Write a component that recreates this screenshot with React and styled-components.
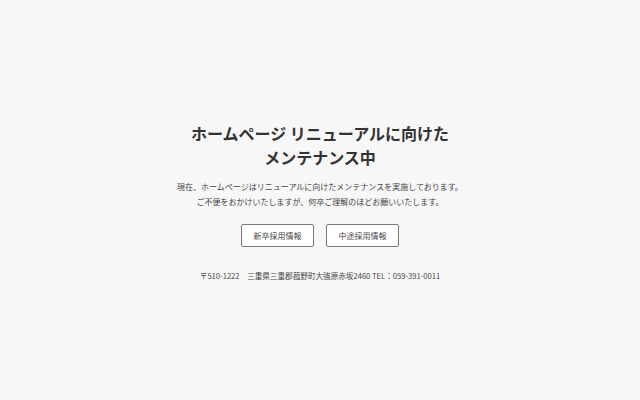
import React from 'react'
import styled, { createGlobalStyle } from 'styled-components'

const GlobalStyle = createGlobalStyle`
  html, body {
    margin: 0;
    padding: 0;
    background: #f7f7f7;
  }
  body {
    font-family: "Noto Sans CJK JP", "Noto Sans", sans-serif;
    color: #333;
  }
`

const Wrapper = styled.main`
  box-sizing: border-box;
  height: 100vh;
  padding-top: 3px;
  display: flex;
  flex-direction: column;
  align-items: center;
  justify-content: center;
  text-align: center;
`

const Title = styled.h1`
  margin: 0 0 10px;
  font-size: 16px;
  line-height: 24px;
  font-weight: 700;
  color: #333;
`

const Message = styled.p`
  margin: 0 0 15px;
  font-size: 8px;
  line-height: 15px;
  color: #444;
`

const ButtonRow = styled.div`
  display: flex;
  gap: 12px;
  margin-bottom: 23px;
`

const LinkButton = styled.a`
  display: inline-flex;
  align-items: center;
  justify-content: center;
  box-sizing: border-box;
  width: 73px;
  height: 23px;
  border: 1px solid #7a7a7a;
  border-radius: 2px;
  background: #fff;
  color: #444;
  font-size: 8px;
  text-decoration: none;
`

const Address = styled.p`
  margin: 0;
  font-size: 7.6px;
  line-height: 12px;
  color: #444;
`

const App = () => {
  return (
    <>
      <GlobalStyle />
      <Wrapper>
        <Title>ホームページ リニューアルに向けた<br />メンテナンス中</Title>
        <Message>
          現在、ホームページはリニューアルに向けたメンテナンスを実施しております。<br />
          ご不便をおかけいたしますが、何卒ご理解のほどお願いいたします。
        </Message>
        <ButtonRow>
          <LinkButton href='#'>新卒採用情報</LinkButton>
          <LinkButton href='#'>中途採用情報</LinkButton>
        </ButtonRow>
        <Address>〒510-1222　三重県三重郡菰野町大強原赤坂2460 TEL：059-391-0011</Address>
      </Wrapper>
    </>
  )
}

export default App
